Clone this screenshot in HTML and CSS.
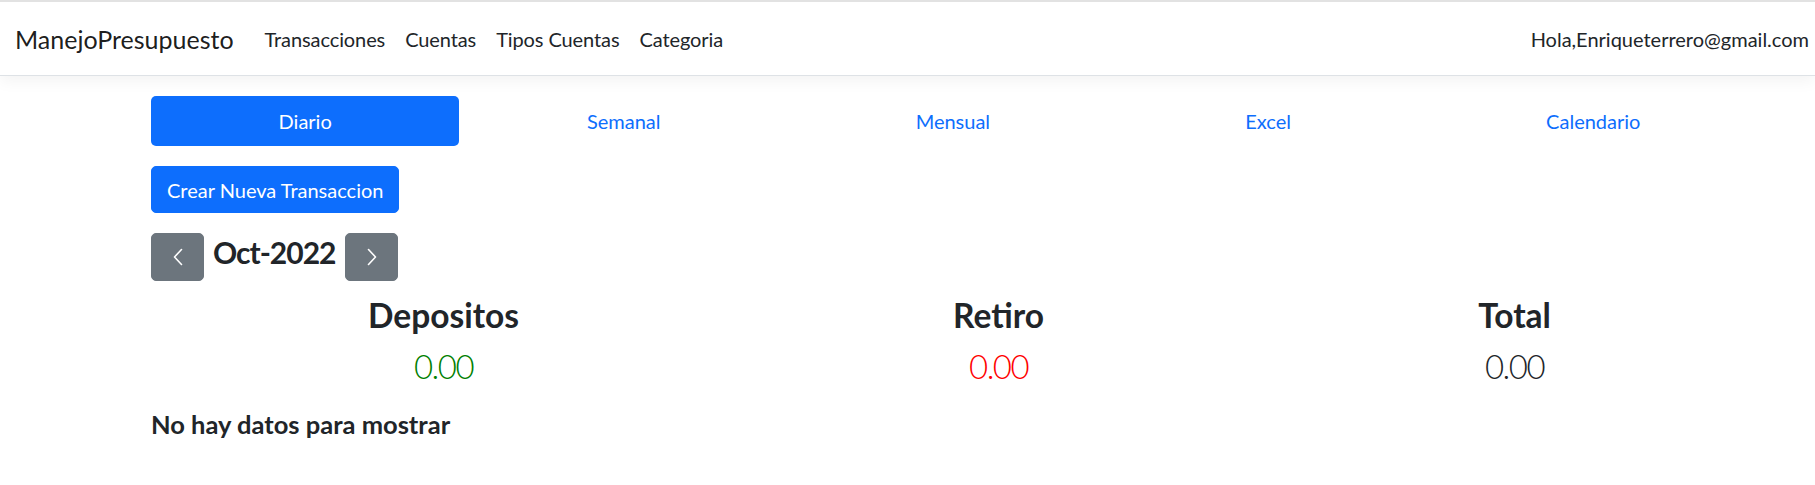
FILE: index.html
```html
<!DOCTYPE html>
<html lang="es">
<head>
<meta charset="utf-8">
<title>ManejoPresupuesto</title>
<link rel="stylesheet" href="styles.css">
</head>
<body>
<header class="topbar">
  <nav class="navbar">
    <a class="brand" href="#">ManejoPresupuesto</a>
    <ul class="nav-links">
      <li><a href="#">Transacciones</a></li>
      <li><a href="#">Cuentas</a></li>
      <li><a href="#">Tipos Cuentas</a></li>
      <li><a href="#">Categoria</a></li>
    </ul>
    <span class="user">Hola,Enriqueterrero@gmail.com</span>
  </nav>
</header>
<main class="container">
  <ul class="tabs">
    <li class="tab"><a class="tab-link active" href="#">Diario</a></li>
    <li class="tab"><a class="tab-link" href="#">Semanal</a></li>
    <li class="tab"><a class="tab-link" href="#">Mensual</a></li>
    <li class="tab"><a class="tab-link" href="#">Excel</a></li>
    <li class="tab"><a class="tab-link" href="#">Calendario</a></li>
  </ul>
  <div class="actions">
    <a class="btn btn-primary" href="#">Crear Nueva Transaccion</a>
  </div>
  <div class="month-nav">
    <a class="btn btn-secondary btn-arrow" href="#" aria-label="Anterior">
      <svg class="chev" viewBox="0 0 10 18" width="10" height="18"><polyline points="8.5,1.5 1.5,9 8.5,16.5" fill="none" stroke="#fff" stroke-width="1.6" stroke-linecap="round" stroke-linejoin="round"/></svg>
    </a>
    <h4 class="month">Oct-2022</h4>
    <a class="btn btn-secondary btn-arrow" href="#" aria-label="Siguiente">
      <svg class="chev" viewBox="0 0 10 18" width="10" height="18"><polyline points="1.5,1.5 8.5,9 1.5,16.5" fill="none" stroke="#fff" stroke-width="1.6" stroke-linecap="round" stroke-linejoin="round"/></svg>
    </a>
  </div>
  <div class="summary">
    <div class="stat">
      <h3 class="stat-title">Depositos</h3>
      <h4 class="amount positive">0.00</h4>
    </div>
    <div class="stat">
      <h3 class="stat-title">Retiro</h3>
      <h4 class="amount negative">0.00</h4>
    </div>
    <div class="stat">
      <h3 class="stat-title">Total</h3>
      <h4 class="amount">0.00</h4>
    </div>
  </div>
  <h5 class="empty">No hay datos para mostrar</h5>
</main>
</body>
</html>
```
FILE: styles.css
```css
* { box-sizing: border-box; }

html, body {
  margin: 0;
  padding: 0;
  background: #fff;
}

body {
  font-family: Lato, "Open Sans", sans-serif;
  color: #212529;
  font-size: 20px;
}

a { text-decoration: none; }

.topbar {
  border-top: 2px solid #e2e2e2;
  border-bottom: 1px solid #dee2e6;
  background: #fff;
  box-shadow: 0 5px 15px rgba(0, 0, 0, 0.05);
}

.navbar {
  height: 73px;
  display: flex;
  align-items: center;
  padding: 0 6px 0 15px;
}

.brand {
  font-size: 25px;
  color: rgba(0, 0, 0, 0.9);
  margin-right: 21px;
  line-height: 1.2;
}

.nav-links {
  display: flex;
  list-style: none;
  margin: 0;
  padding: 0;
  flex: 1;
}

.nav-links a {
  display: block;
  padding: 0 10px;
  font-size: 20px;
  letter-spacing: -0.1px;
  color: #212529;
  line-height: 1.2;
}

.user {
  font-size: 20px;
  color: #212529;
  line-height: 1.2;
}

.container {
  margin-left: 151px;
  width: 1617px;
}

.tabs {
  display: flex;
  list-style: none;
  margin: 20px 0 0;
  padding: 0;
}

.tab {
  flex: 1 1 auto;
  text-align: center;
}

.tab-link {
  display: block;
  padding: 10px 20px;
  line-height: 30px;
  font-size: 20px;
  color: #0d6efd;
  border-radius: 5px;
}

.tab-link.active {
  background: #0d6efd;
  color: #fff;
}

.actions {
  margin-top: 20px;
}

.btn {
  display: inline-block;
  border: 1px solid transparent;
  border-radius: 5px;
  font-size: 20px;
  line-height: 30px;
  padding: 7.5px 15px;
  color: #fff;
}

.btn-primary {
  background: #0d6efd;
  border-color: #0d6efd;
}

.btn-secondary {
  background: #6c757d;
  border-color: #6c757d;
}

.month-nav {
  display: flex;
  align-items: center;
  margin-top: 20px;
}

.btn-arrow {
  width: 53px;
  height: 48px;
  padding: 0;
  display: flex;
  align-items: center;
  justify-content: center;
}

.chev { display: block; }

.month {
  font-size: 30px;
  font-weight: 700;
  letter-spacing: -1px;
  line-height: 1.2;
  margin: 0 10px 10px 9px;
}

.summary {
  display: flex;
  justify-content: space-around;
  margin-top: 14px;
}

.stat {
  text-align: center;
}

.stat-title {
  font-size: 33.5px;
  font-weight: 700;
  line-height: 1.2;
  margin: 0 0 12px;
}

.amount {
  font-size: 33px;
  font-weight: 300;
  letter-spacing: -1.5px;
  line-height: 1.2;
  margin: 0;
}

.positive { color: green; }
.negative { color: red; }

.empty {
  font-size: 25.5px;
  font-weight: 700;
  line-height: 1.2;
  margin: 22px 0 0;
}
```
